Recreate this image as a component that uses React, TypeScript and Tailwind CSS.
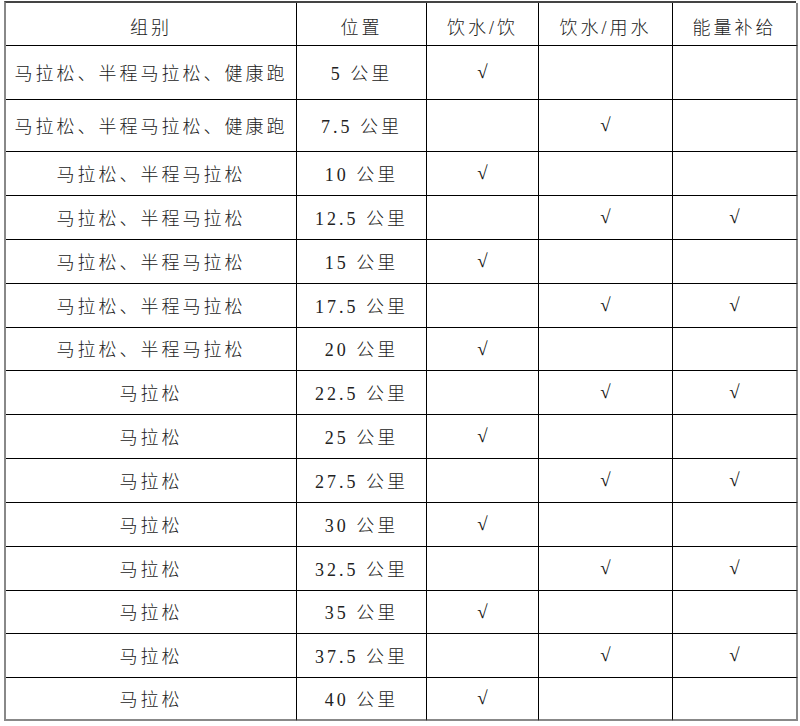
import React from "react";

type Row = { g: string; p: string; a?: boolean; b?: boolean; c?: boolean; h: string };

const rows: Row[] = [
  { g: "马拉松、半程马拉松、健康跑", p: "5 公里", a: true, h: "h-[54px]" },
  { g: "马拉松、半程马拉松、健康跑", p: "7.5 公里", b: true, h: "h-[52px]" },
  { g: "马拉松、半程马拉松", p: "10 公里", a: true, h: "h-[44px]" },
  { g: "马拉松、半程马拉松", p: "12.5 公里", b: true, c: true, h: "h-[44px]" },
  { g: "马拉松、半程马拉松", p: "15 公里", a: true, h: "h-[44px]" },
  { g: "马拉松、半程马拉松", p: "17.5 公里", b: true, c: true, h: "h-[44px]" },
  { g: "马拉松、半程马拉松", p: "20 公里", a: true, h: "h-[43px]" },
  { g: "马拉松", p: "22.5 公里", b: true, c: true, h: "h-[44px]" },
  { g: "马拉松", p: "25 公里", a: true, h: "h-[44px]" },
  { g: "马拉松", p: "27.5 公里", b: true, c: true, h: "h-[44px]" },
  { g: "马拉松", p: "30 公里", a: true, h: "h-[44px]" },
  { g: "马拉松", p: "32.5 公里", b: true, c: true, h: "h-[44px]" },
  { g: "马拉松", p: "35 公里", a: true, h: "h-[43px]" },
  { g: "马拉松", p: "37.5 公里", b: true, c: true, h: "h-[44px]" },
  { g: "马拉松", p: "40 公里", a: true, h: "h-[43px]" },
];

const font = { fontFamily: '"Liberation Serif", "Noto Sans CJK SC", serif' };

function Cell({ children, last, bottom, h, pt }: { children?: React.ReactNode; last?: boolean; bottom?: boolean; h: string; pt?: string }) {
  return (
    <div
      className={
        "flex items-center justify-center text-[18px] tracking-[3px] text-[#222] font-light " +
        h +
        " " +
        (pt ?? "pt-[3px]") +
        (last ? " border-r-2 border-r-[#888]" : " border-r border-r-black") +
        (bottom ? " border-b-2 border-b-[#888]" : " border-b border-b-black")
      }
    >
      {children}
    </div>
  );
}

function Check() {
  return (
    <span className="text-[19px] tracking-normal text-[#111] -mt-[3px]" style={{ fontFamily: '"Liberation Serif", serif' }}>
      √
    </span>
  );
}

export default function App() {
  return (
    <div className="w-[800px] h-[726px] bg-white pt-[1px] pl-[4px]" style={font}>
      <div className="grid w-[792px] grid-cols-[291px_130px_112px_134px_125px] border-l-2 border-l-[#888] border-t-2 border-t-[#444]">
        {["组别", "位置", "饮水/饮", "饮水/用水", "能量补给"].map((t, i) => (
          <Cell key={t} h="h-[43px]" pt="pt-[8px]" last={i === 4}>
            {t}
          </Cell>
        ))}
        {rows.map((r, idx) => {
          const bottom = idx === rows.length - 1;
          return (
            <React.Fragment key={idx}>
              <Cell h={r.h} bottom={bottom}>{r.g}</Cell>
              <Cell h={r.h} bottom={bottom}>{r.p}</Cell>
              <Cell h={r.h} bottom={bottom}>{r.a ? <Check /> : null}</Cell>
              <Cell h={r.h} bottom={bottom}>{r.b ? <Check /> : null}</Cell>
              <Cell h={r.h} bottom={bottom} last>{r.c ? <Check /> : null}</Cell>
            </React.Fragment>
          );
        })}
      </div>
    </div>
  );
}
